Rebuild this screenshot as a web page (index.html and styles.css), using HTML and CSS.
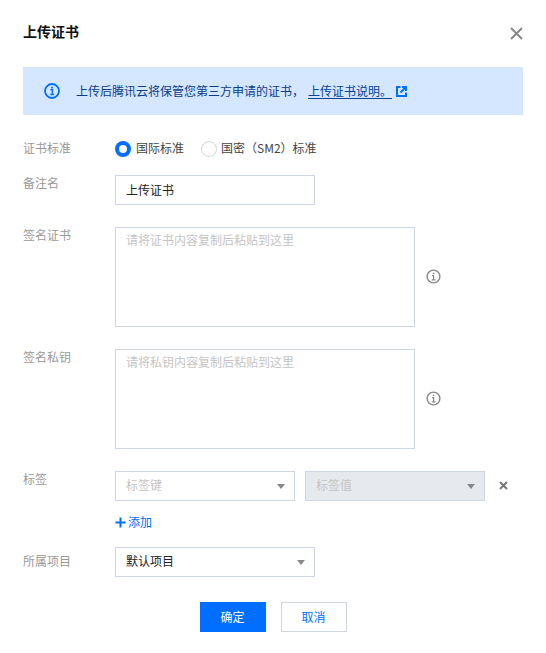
FILE: index.html
```html
<!DOCTYPE html>
<html lang="zh-CN">
<head>
<meta charset="utf-8">
<title>上传证书</title>
<link rel="stylesheet" href="styles.css">
</head>
<body>
<div class="dialog">
  <header class="head">
    <h1 class="title">上传证书</h1>
    <svg class="close" width="13" height="13" viewBox="0 0 13 13"><path d="M1 1l11 11M12 1L1 12" stroke="#888" stroke-width="2" fill="none"/></svg>
  </header>
  <div class="alert">
    <svg class="alert-icon" width="16" height="16" viewBox="0 0 16 16"><circle cx="8" cy="8" r="7" fill="none" stroke="#006eff" stroke-width="1.8"/><rect x="7.1" y="3.7" width="1.8" height="1.8" fill="#006eff"/><path d="M6.4 6.7H8.4V11.2M6.2 11.5H10" fill="none" stroke="#006eff" stroke-width="1.5"/></svg>
    <span class="alert-text">上传后腾讯云将保管您第三方申请的证书，</span>
    <a class="alert-link">上传证书说明。</a>
    <svg class="ext" width="11" height="11" viewBox="0 0 11 11"><path d="M4.5 1H1V10H10V6.5" fill="none" stroke="#006eff" stroke-width="2"/><path d="M6 1H10V5" fill="none" stroke="#006eff" stroke-width="2"/><path d="M9.5 1.5L4.5 6.5" stroke="#006eff" stroke-width="2"/></svg>
  </div>
  <form class="form">
    <div class="row row-radio">
      <span class="label">证书标准</span>
      <div class="radios">
        <span class="radio"><i class="dot dot-on"></i>国际标准</span>
        <span class="radio radio-wide"><i class="dot"></i>国密（SM2）标准</span>
      </div>
    </div>
    <div class="row">
      <span class="label">备注名</span>
      <input class="input" type="text" value="上传证书">
    </div>
    <div class="row">
      <span class="label">签名证书</span>
      <textarea class="area" placeholder="请将证书内容复制后粘贴到这里"></textarea>
      <svg class="tip" width="15" height="15" viewBox="0 0 15 15"><circle cx="7.5" cy="7.5" r="6.4" fill="none" stroke="#888" stroke-width="1.4"/><rect x="6.8" y="3.6" width="1.5" height="1.5" fill="#888"/><path d="M6 6.6H7.6V10.8M5.8 10.9H9.4" fill="none" stroke="#888" stroke-width="1.2"/></svg>
    </div>
    <div class="row">
      <span class="label">签名私钥</span>
      <textarea class="area" placeholder="请将私钥内容复制后粘贴到这里"></textarea>
      <svg class="tip" width="15" height="15" viewBox="0 0 15 15"><circle cx="7.5" cy="7.5" r="6.4" fill="none" stroke="#888" stroke-width="1.4"/><rect x="6.8" y="3.6" width="1.5" height="1.5" fill="#888"/><path d="M6 6.6H7.6V10.8M5.8 10.9H9.4" fill="none" stroke="#888" stroke-width="1.2"/></svg>
    </div>
    <div class="row row-tag">
      <span class="label">标签</span>
      <div class="tag-col">
        <div class="tag-line">
          <div class="select select-tag placeholder">标签键<i class="caret"></i></div>
          <div class="select select-tag placeholder disabled">标签值<i class="caret"></i></div>
          <svg class="del" width="9" height="9" viewBox="0 0 9 9"><path d="M1 1l7 7M8 1L1 8" stroke="#777" stroke-width="2" fill="none"/></svg>
        </div>
        <div class="add"><svg width="11" height="11" viewBox="0 0 11 11"><path d="M5.5 0.5v10M0.5 5.5h10" stroke="#006eff" stroke-width="2" fill="none"/></svg>添加</div>
      </div>
    </div>
    <div class="row">
      <span class="label label-mid">所属项目</span>
      <div class="select select-wide">默认项目<i class="caret"></i></div>
    </div>
    <div class="actions">
      <button class="btn btn-primary" type="button">确定</button>
      <button class="btn" type="button">取消</button>
    </div>
  </form>
</div>
</body>
</html>
```
FILE: styles.css
```css
* { box-sizing: border-box; }
html, body { margin: 0; background: #fff; }
body {
  width: 546px;
  height: 653px;
  overflow: hidden;
  font: 12px/20px "Noto Sans CJK SC", "Liberation Sans", sans-serif;
  color: #000;
}
.dialog { padding: 21px 23px 0; }
.head { display: flex; justify-content: space-between; height: 46px; }
.title { margin: 0; font-size: 14px; font-weight: 700; line-height: 20px; color: #111; }
.close { margin-top: 6px; }
.alert {
  display: flex;
  align-items: center;
  height: 48px;
  padding-left: 21px;
  background: #d5e7ff;
  color: #0b3c8c;
}
.alert-icon { margin-right: 16px; }
.alert-link { margin-left: 4px; color: #00429a; text-decoration: underline; text-underline-offset: 2px; }
.ext { margin-left: 4px; }
.form { margin-top: 24px; }
.row { display: flex; align-items: flex-start; margin-bottom: 22px; }
.row-radio { margin-bottom: 18px; }
.row-tag { margin-bottom: 15px; }
.label { flex: 0 0 92px; color: #999; line-height: 16px; }
.row-radio .label { line-height: 18px; }
.label-mid { margin-top: 6px; }
.radios { display: flex; gap: 17px; }
.radio { display: flex; align-items: center; gap: 5px; color: #444; line-height: 18px; }
.radio-wide { gap: 4px; }
.dot { width: 16px; height: 16px; margin-top: 2px; border-radius: 50%; border: 1px solid #cfd5de; background: #fff; }
.dot-on { border: 4px solid #006eff; }
.input, .area, .select {
  border: 1px solid #cfd5de;
  background: #fff;
  border-radius: 0;
  font: inherit;
  outline: none;
}
.input { width: 200px; height: 30px; padding: 0 10px 2px; color: #222; }
.area { width: 300px; height: 100px; padding: 2px 10px; resize: none; display: block; }
.area::placeholder { color: #c4c4c4; opacity: 1; }
.tip { margin: 42px 0 0 11px; }
.select { position: relative; height: 30px; padding: 0 10px; line-height: 26px; color: #222; }
.select-wide { width: 200px; }
.select-tag { width: 180px; }
.select.placeholder { color: #c4c4c4; }
.disabled { background: #e6e9ee; }
.caret {
  position: absolute;
  right: 9px;
  top: 12px;
  border-style: solid;
  border-width: 5px 4px 0;
  border-color: #888 transparent transparent;
}
.tag-line { display: flex; align-items: center; gap: 10px; }
.del { margin-left: 4px; margin-top: -1px; }
.add { display: flex; align-items: center; gap: 2px; margin-top: 11px; color: #006eff; }
.actions { display: flex; justify-content: center; gap: 15px; margin-top: 25px; }
.row:has(+ .actions) { margin-bottom: 0; }
.btn {
  width: 66px;
  height: 30px;
  padding: 0;
  border: 1px solid #cfd5de;
  background: #fff;
  color: #006eff;
  font: inherit;
  border-radius: 0;
}
.btn-primary { background: #006eff; border-color: #006eff; color: #fff; }
```
